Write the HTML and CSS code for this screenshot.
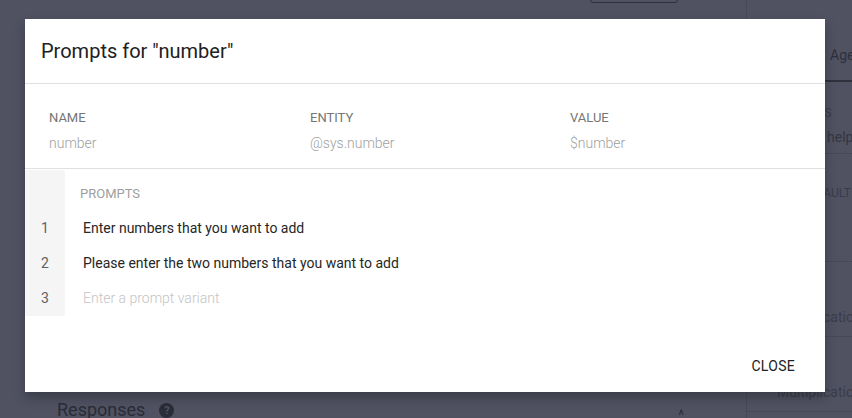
FILE: index.html
```html
<!DOCTYPE html>
<html>
<head>
<meta charset="utf-8">
<link rel="stylesheet" href="styles.css">
</head>
<body>
<div class="app">
  <div class="main">
    <div class="top-row"><div class="ghost-btn"></div></div>
    <div class="main-bottom">
      <div class="responses">Responses <span class="help-ico">?</span></div>
      <div class="caret">^</div>
    </div>
  </div>
  <div class="side">
    <div class="side-tab">Agent</div>
    <div class="side-block">
      <div class="side-label">KEYS</div>
      <div class="side-text">help</div>
    </div>
    <div class="side-block tall">
      <div class="side-label">DEFAULT</div>
    </div>
    <div class="side-row">Multiplication</div>
    <div class="side-row">Multiplication</div>
  </div>
</div>

<div class="dialog">
  <div class="dialog-title">Prompts for "number"</div>
  <div class="params">
    <div class="param">
      <div class="param-label">NAME</div>
      <div class="param-value">number</div>
    </div>
    <div class="param">
      <div class="param-label">ENTITY</div>
      <div class="param-value">@sys.number</div>
    </div>
    <div class="param">
      <div class="param-label">VALUE</div>
      <div class="param-value">$number</div>
    </div>
  </div>
  <div class="prompts">
    <div class="gutter">
      <div class="gutter-head"></div>
      <div class="num">1</div>
      <div class="num">2</div>
      <div class="num">3</div>
    </div>
    <div class="prompt-list">
      <div class="prompts-label">PROMPTS</div>
      <div class="prompt">Enter numbers that you want to add</div>
      <div class="prompt">Please enter the two numbers that you want to add</div>
      <div class="prompt placeholder">Enter a prompt variant</div>
    </div>
  </div>
  <div class="actions">
    <button class="close-btn">CLOSE</button>
  </div>
</div>
</body>
</html>
```

FILE: styles.css
```css
* { box-sizing: border-box; }
html, body {
  margin: 0;
  padding: 0;
  width: 852px;
  height: 418px;
  overflow: hidden;
}
body {
  background: #505262;
  font-family: Roboto, "Liberation Sans", sans-serif;
  position: relative;
}
.app {
  display: grid;
  grid-template-columns: 746px 106px;
  height: 418px;
}
.main {
  display: flex;
  flex-direction: column;
  justify-content: space-between;
}
.top-row {
  height: 19px;
  padding-left: 590px;
}
.ghost-btn {
  width: 88px;
  height: 30px;
  margin-top: -27px;
  border: 1px solid #2e303b;
  border-radius: 3px;
}
.main-bottom {
  display: flex;
  align-items: flex-start;
  justify-content: space-between;
  height: 16px;
  padding-left: 57px;
  padding-right: 62px;
}
.responses {
  font-size: 18px;
  color: #2a2c37;
  line-height: 22px;
  margin-top: -3px;
  display: flex;
  align-items: center;
  gap: 14px;
}
.help-ico {
  width: 15px;
  height: 15px;
  border-radius: 50%;
  background: #2a2c37;
  color: #505262;
  font-size: 11px;
  font-weight: 700;
  line-height: 15px;
  text-align: center;
}
.caret {
  color: #2a2c37;
  font-size: 14px;
  line-height: 14px;
  margin-top: 6px;
}
.side {
  border-left: 1px solid #474957;
  display: flex;
  flex-direction: column;
  color: #2e303b;
  font-size: 14px;
}
.side-tab {
  height: 82px;
  padding: 46px 0 0 83px;
  border-bottom: 2px solid #2e303b;
  line-height: 18px;
}
.side-block {
  height: 72px;
  padding: 24px 0 0 56px;
  border-bottom: 1px dotted #3e404c;
}
.side-block.tall {
  height: 108px;
  padding-top: 32px;
}
.side-label {
  font-size: 12px;
  color: #3a3c48;
  line-height: 14px;
}
.side-text {
  margin-top: 9px;
  margin-left: 24px;
  font-size: 14px;
  line-height: 16px;
  color: #33353f;
}
.side-row {
  height: 75px;
  padding: 47px 0 0 30px;
  border-bottom: 1px solid #474957;
  line-height: 16px;
  white-space: nowrap;
  color: #3a3c48;
}

/* Dialog */
.dialog {
  position: absolute;
  left: 25px;
  top: 19px;
  width: 800px;
  height: 373px;
  background: #ffffff;
  box-shadow: 0 6px 10px rgba(20, 22, 30, 0.35);
  display: flex;
  flex-direction: column;
}
.dialog-title {
  height: 65px;
  padding-left: 16px;
  display: flex;
  align-items: center;
  font-size: 20px;
  color: #212121;
  border-bottom: 1px solid #e0e0e0;
}
.params {
  height: 85px;
  border-bottom: 1px solid #e0e0e0;
  display: grid;
  grid-template-columns: 261px 260px 1fr;
  padding: 26px 0 0 24px;
}
.param-label {
  font-size: 13px;
  line-height: 16px;
  color: #757575;
}
.param-value {
  margin-top: 9px;
  font-size: 14px;
  line-height: 16px;
  color: #a0a0a0;
  font-weight: 300;
}
.prompts {
  display: flex;
  padding-top: 1px;
}
.gutter {
  width: 40px;
  background: #f5f5f5;
  border-radius: 3px;
  display: flex;
  flex-direction: column;
}
.gutter-head { height: 41px; }
.num {
  height: 35px;
  line-height: 35px;
  text-align: center;
  font-size: 14px;
  color: #616161;
}
.prompt-list {
  display: flex;
  flex-direction: column;
  padding-left: 15px;
}
.prompts-label {
  height: 41px;
  padding-top: 16px;
  font-size: 13px;
  line-height: 16px;
  color: #9e9e9e;
}
.prompt {
  height: 35px;
  line-height: 35px;
  padding-left: 3px;
  font-size: 14px;
  color: #262626;
}
.prompt.placeholder {
  color: #c4c4c4;
  font-weight: 300;
}
.actions {
  margin-top: auto;
  height: 53px;
  display: flex;
  align-items: center;
  justify-content: flex-end;
  padding-right: 22px;
}
.close-btn {
  background: none;
  border: none;
  font-family: Roboto, "Liberation Sans", sans-serif;
  font-size: 14px;
  font-weight: 400;
  color: #212121;
  padding: 0 8px;
  height: 36px;
  letter-spacing: 0.3px;
}
```
